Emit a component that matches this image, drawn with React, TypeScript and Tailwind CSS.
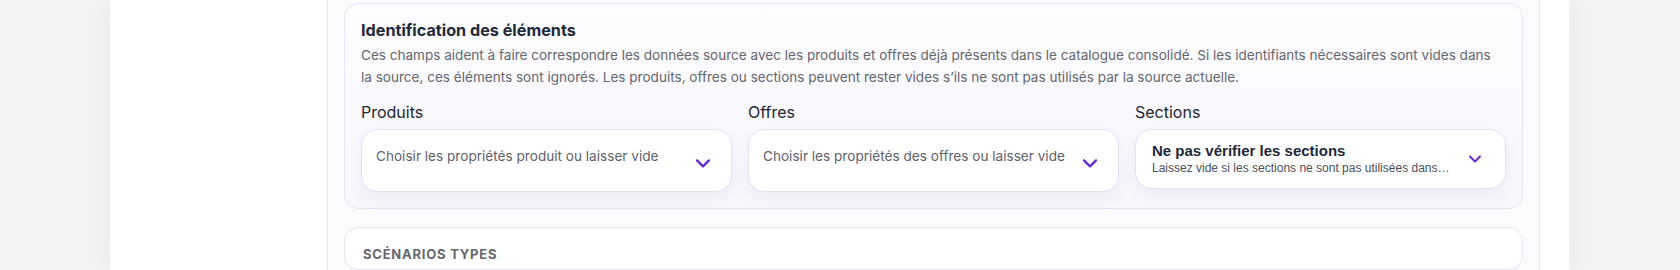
import { ChevronDown } from 'lucide-react';

const inter = { fontFamily: 'Inter, "Noto Sans", sans-serif' };

const PlaceholderSelect = ({ text }: { text: string }) => (
  <div className="relative h-[63px] rounded-2xl border border-[#e3e0f2] bg-white pl-[14px] pr-10 pt-4 shadow-[0_6px_16px_rgba(120,110,200,0.08)]">
    <span className="block whitespace-nowrap text-[13.6px] leading-5 text-[#5f626b]">{text}</span>
    <ChevronDown
      size={24}
      strokeWidth={2.25}
      className="absolute right-[16px] top-1/2 -translate-y-[40%] text-[#6527c9]"
    />
  </div>
);

const App = () => {
  return (
    <div className="flex h-[270px] w-full overflow-hidden bg-[#f2f3f5]" style={inter}>
      <div className="w-[110px] shrink-0" />

      <div className="flex w-[1459px] shrink-0 bg-white shadow-[0_0_24px_rgba(15,23,42,0.06)]">
        <div className="w-[217px] shrink-0" />

        <div className="flex w-[1213px] shrink-0 flex-col gap-[18px] border-x border-[#e5e4f0] bg-[#fbfbfd] px-4 pt-[3px]">
          <section className="rounded-[14px] border border-[#e6e5f2] bg-gradient-to-b from-[#fdfdff] to-[#f6f6fc] px-4 pb-4 pt-4">
            <h3 className="text-[16.2px] font-bold leading-5 text-[#1e293b]">Identification des éléments</h3>
            <p className="mt-1 max-w-[1136px] text-[13.55px] leading-[22px] text-[#65676e]">
              Ces champs aident à faire correspondre les données source avec les produits et offres déjà présents dans le catalogue consolidé. Si les identifiants nécessaires sont vides dans la source, ces éléments sont ignorés. Les produits, offres ou sections peuvent rester vides s’ils ne sont pas utilisés par la source actuelle.
            </p>

            <div className="mt-3 grid grid-cols-3 items-start gap-4">
              <div>
                <div className="mb-[5px] text-[16px] leading-6 text-[#1f2430]">Produits</div>
                <PlaceholderSelect text="Choisir les propriétés produit ou laisser vide" />
              </div>
              <div>
                <div className="mb-[5px] text-[16px] leading-6 text-[#1f2430]">Offres</div>
                <PlaceholderSelect text="Choisir les propriétés des offres ou laisser vide" />
              </div>
              <div>
                <div className="mb-[5px] text-[16px] leading-6 text-[#1f2430]">Sections</div>
                <div className="relative rounded-2xl border border-[#e3e0f2] bg-white py-3 pl-4 pr-12 shadow-[0_6px_16px_rgba(120,110,200,0.08)]">
                  <div style={{ fontFamily: '"Liberation Sans", Arial, sans-serif' }}>
                    <div className="text-[15px] font-bold leading-[18px] text-[#1e293b]">Ne pas vérifier les sections</div>
                    <div className="whitespace-nowrap text-[12px] leading-4 text-[#4b5060]">
                      Laissez vide si les sections ne sont pas utilisées dans…
                    </div>
                  </div>
                  <ChevronDown
                    size={20}
                    strokeWidth={2.25}
                    className="absolute right-[20px] top-1/2 -translate-y-1/2 text-[#6527c9]"
                  />
                </div>
              </div>
            </div>
          </section>

          <section className="h-[120px] rounded-[14px] border border-[#e6e5f2] bg-white px-[18px] pt-4">
            <h4 className="text-[13px] font-bold uppercase leading-5 tracking-[0.06em] text-[#66676e]">Scénarios types</h4>
          </section>
        </div>

        <div className="w-[29px] shrink-0" />
      </div>
    </div>
  );
};

export default App;
